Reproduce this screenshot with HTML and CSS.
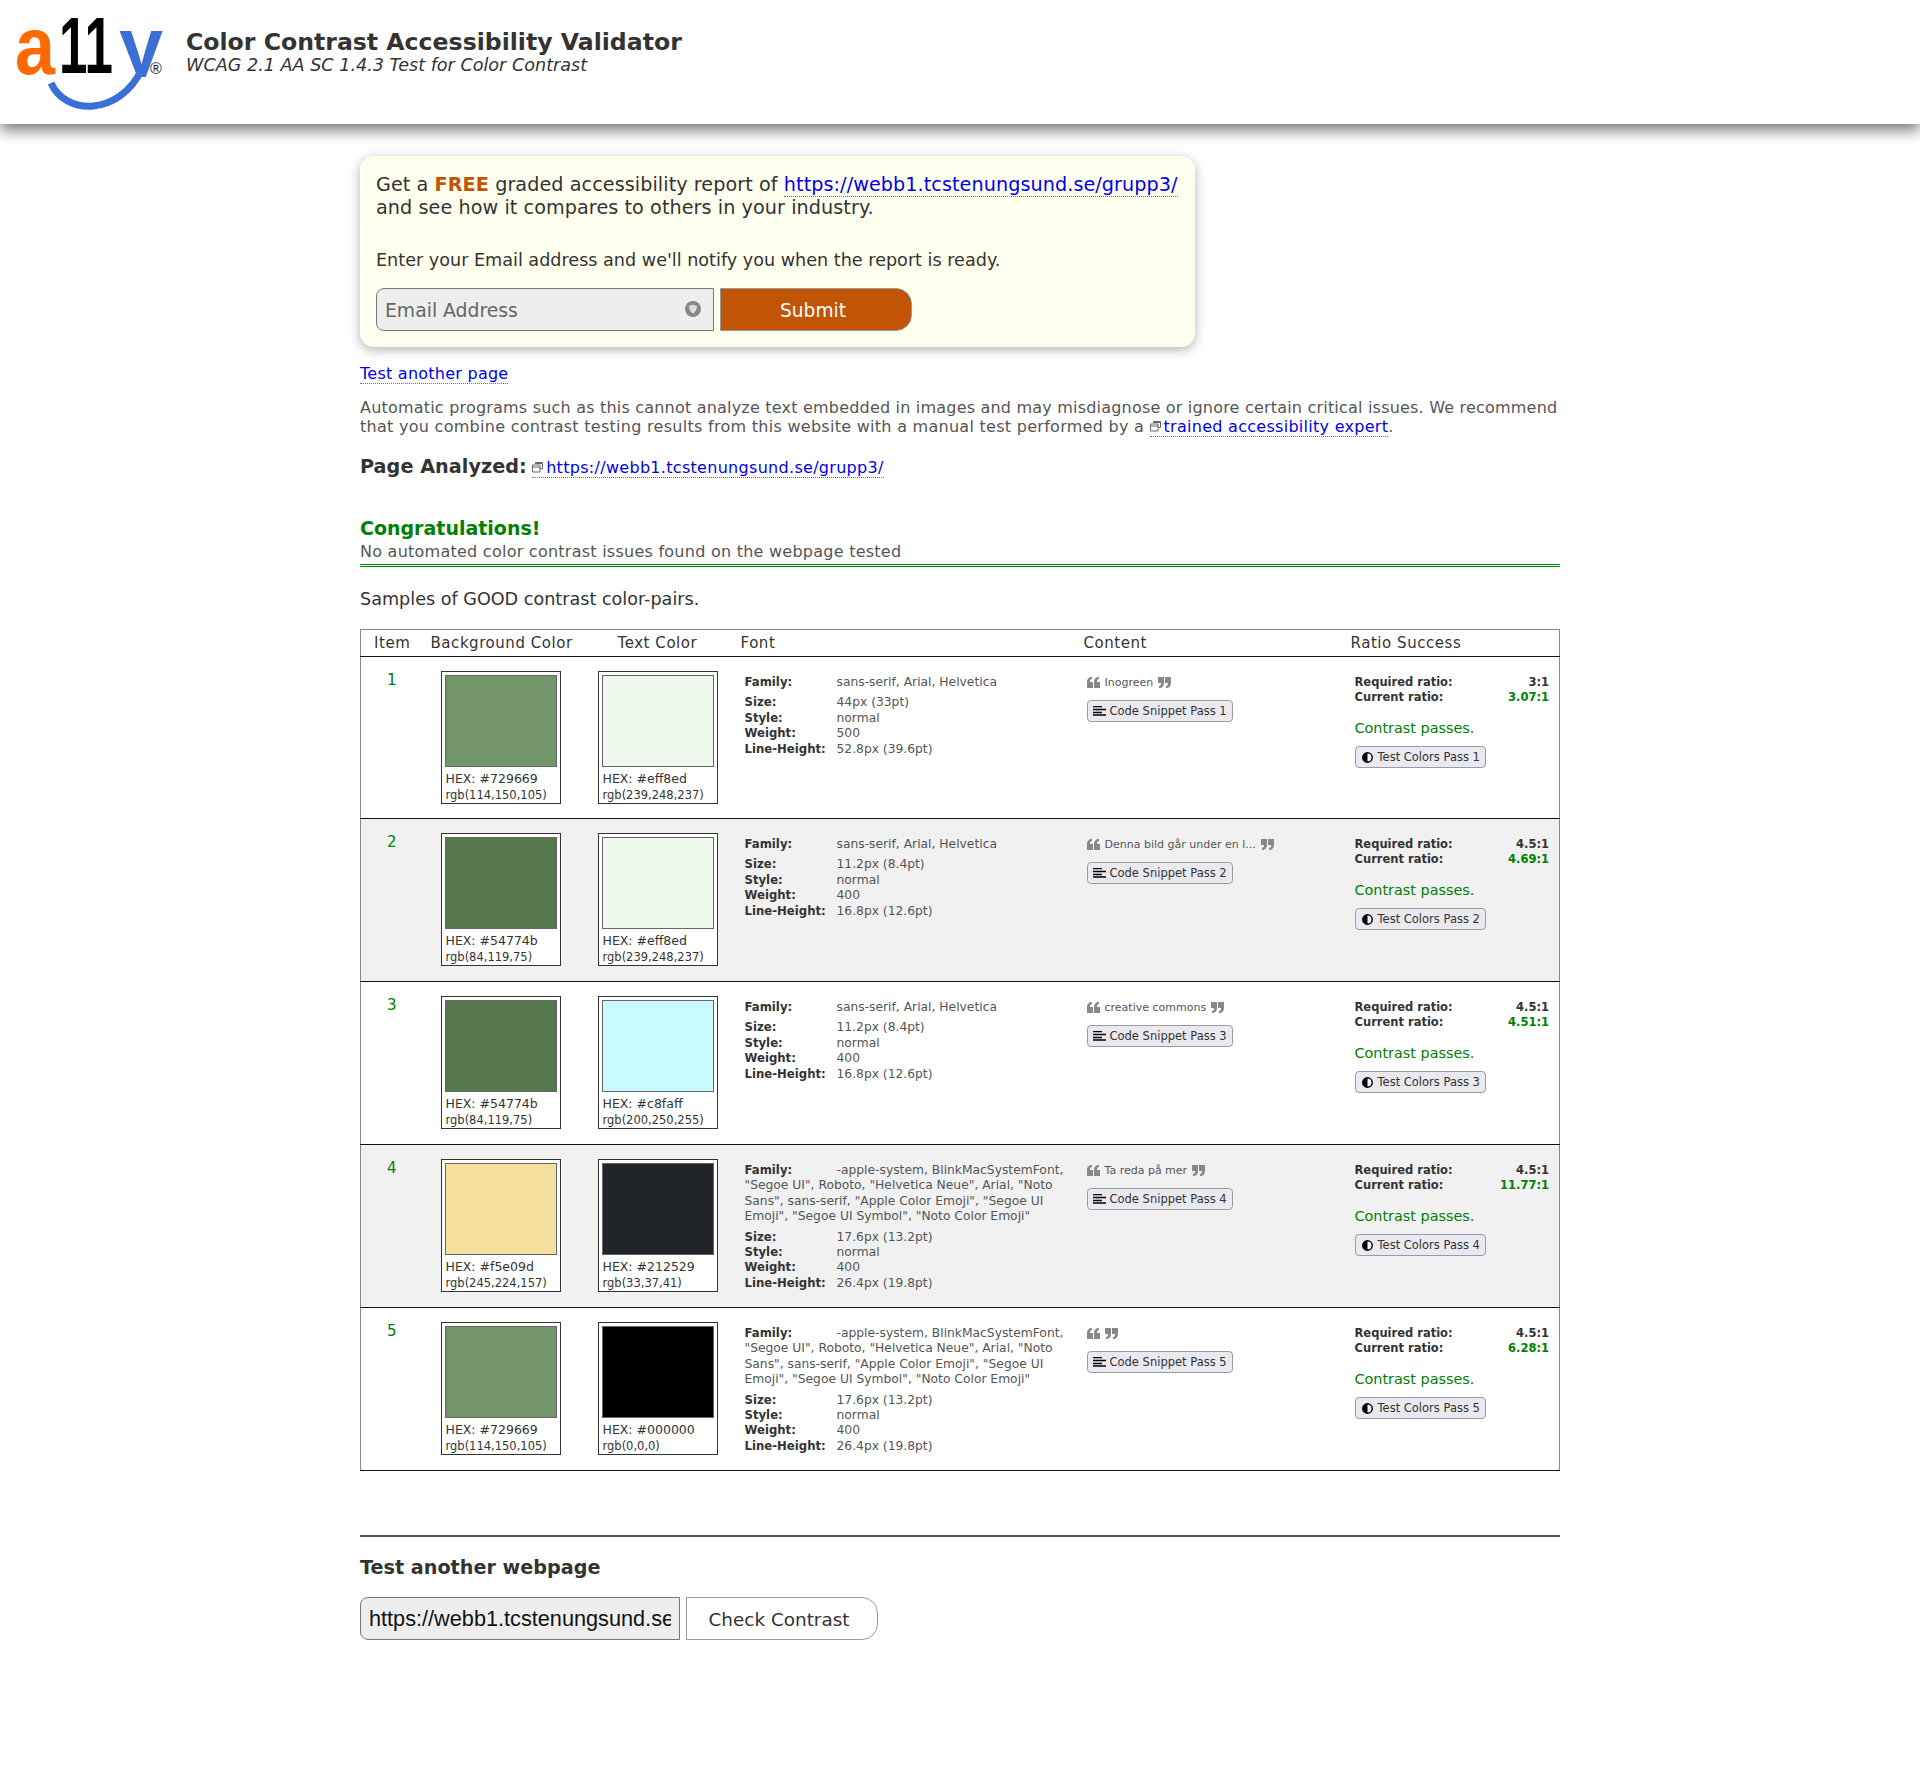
FILE: index.html
```
<!DOCTYPE html>
<html lang="en">
<head>
  <meta charset="UTF-8" />
  <title>Color Contrast Accessibility Validator</title>
  <link rel="stylesheet" href="styles.css">
</head>
<body>
  <header class="site-header">
    <svg class="logo" width="150" height="96" viewBox="0 0 150 96" aria-label="a11y">
      <defs><clipPath id="y-clip"><rect x="100" y="0" width="50" height="62"/></clipPath></defs>
      <path d="M36 68 C50 100 104 102 127 54" fill="none" stroke="#3a6fd6" stroke-width="7"/>
      <text x="0" y="59" font-size="82" font-weight="700" fill="#ff6a00" textLength="40" lengthAdjust="spacingAndGlyphs">a</text>
      <text x="44" y="58" font-size="80" fill="#000" font-weight="700" textLength="54" lengthAdjust="spacingAndGlyphs">11</text>
      <text x="104" y="59" font-size="82" font-weight="700" fill="#3a6fd6" textLength="44" lengthAdjust="spacingAndGlyphs" clip-path="url(#y-clip)">y</text>
      <text x="135" y="59" font-size="16" fill="#222">®</text>
    </svg>
    <div class="titles">
      <h1>Color Contrast Accessibility Validator</h1>
      <p>WCAG 2.1 AA SC 1.4.3 Test for Color Contrast</p>
    </div>
  </header>

  <main class="content">
    <section class="report-card">
      <p class="report-lead">Get a <strong>FREE</strong> graded accessibility report of <a href="#">https://webb1.tcstenungsund.se/grupp3/</a> and see how it compares to others in your industry.</p>
      <p class="report-note">Enter your Email address and we'll notify you when the report is ready.</p>
      <form class="report-form">
        <div class="email-wrap">
          <input class="text-input email-input" type="text" placeholder="Email Address">
          <svg class="email-icon" width="16" height="16" viewBox="0 0 16 16"><circle cx="8" cy="8" r="8" fill="#888"/><path d="M8 3.500 12 5c0 3.500-1.500 6-4 7.500-2.500-1.500-4-4-4-7.500z" fill="#ddd"/></svg>
        </div>
        <button class="submit-btn" type="button">Submit</button>
      </form>
    </section>

    <p class="again"><a href="#">Test another page</a></p>

    <p class="disclaimer">Automatic programs such as this cannot analyze text embedded in images and may misdiagnose or ignore certain critical issues. We recommend that you combine contrast testing results from this website with a manual test performed by a <a href="#"><svg class="ext" width="11" height="11" viewBox="0 0 11 11"><path d="M3 .5h7.500v6H8M.5 3h7.500v7H.5zM.5 5h7.500M3 1.500h7" fill="none" stroke="#666"/></svg>trained accessibility expert</a>.</p>

    <p class="analyzed"><strong>Page Analyzed:</strong> <a href="#"><svg class="ext" width="11" height="11" viewBox="0 0 11 11"><path d="M3 .5h7.500v6H8M.5 3h7.500v7H.5zM.5 5h7.500M3 1.500h7" fill="none" stroke="#666"/></svg>https://webb1.tcstenungsund.se/grupp3/</a></p>

    <h2 class="congrats">Congratulations!</h2>
    <p class="congrats-sub">No automated color contrast issues found on the webpage tested</p>

    <p class="samples">Samples of GOOD contrast color-pairs.</p>

    <table class="results">
      <thead>
        <tr>
          <th class="col-item">Item</th>
          <th class="col-bg">Background Color</th>
          <th class="col-text">Text Color</th>
          <th class="col-font">Font</th>
          <th class="col-content">Content</th>
          <th class="col-ratio">Ratio Success</th>
        </tr>
      </thead>
      <tbody>
        <tr>
          <td class="num">1</td>
          <td><div class="swatch"><div class="chip" style="background:#729669"></div><div class="hex">HEX: #729669</div><div class="rgb">rgb(114,150,105)</div></div></td>
          <td><div class="swatch"><div class="chip" style="background:#eff8ed"></div><div class="hex">HEX: #eff8ed</div><div class="rgb">rgb(239,248,237)</div></div></td>
          <td class="font-info">
            <p class="family"><b>Family:</b>sans-serif, Arial, Helvetica</p>
            <p><b>Size:</b>44px (33pt)</p><p><b>Style:</b>normal</p><p><b>Weight:</b>500</p><p><b>Line-Height:</b>52.8px (39.6pt)</p>
          </td>
          <td class="content-cell">
            <div class="quote"><svg class="q" width="13" height="11" viewBox="0 0 13 11"><path d="M0 11V5C0 2 2 0 5 0v2C3.500 2 3 3 3 5h3v6zM7 11V5c0-3 2-5 5-5v2c-1.500 0-2 1-2 3h3v6z" fill="#888"/></svg><span>Inogreen</span><svg class="q" width="13" height="11" viewBox="0 0 13 11"><path d="M13 0v6c0 3-2 5-5 5V9c1.500 0 2-1 2-3H7V0zM6 0v6c0 3-2 5-5 5V9c1.500 0 2-1 2-3H0V0z" fill="#888"/></svg></div>
            <button class="mini-btn" type="button"><svg width="13" height="10" viewBox="0 0 13 10"><path d="M0 .5h9M0 3.500h13M0 6.500h9M0 9h13" stroke="#000" stroke-width="1.500"/></svg>Code Snippet Pass 1</button>
          </td>
          <td class="ratio-cell">
            <div class="ratio-line"><b>Required ratio:</b><b>3:1</b></div>
            <div class="ratio-line"><b>Current ratio:</b><b class="good">3.07:1</b></div>
            <p class="passes">Contrast passes.</p>
            <button class="mini-btn" type="button"><svg width="11" height="11" viewBox="0 0 11 11"><circle cx="5.500" cy="5.500" r="4.700" fill="#fff" stroke="#000" stroke-width="1.500"/><path d="M5.500 .8a4.700 4.700 0 0 0 0 9.400z"/></svg>Test Colors Pass 1</button>
          </td>
        </tr>
        <tr>
          <td class="num">2</td>
          <td><div class="swatch"><div class="chip" style="background:#54774b"></div><div class="hex">HEX: #54774b</div><div class="rgb">rgb(84,119,75)</div></div></td>
          <td><div class="swatch"><div class="chip" style="background:#eff8ed"></div><div class="hex">HEX: #eff8ed</div><div class="rgb">rgb(239,248,237)</div></div></td>
          <td class="font-info">
            <p class="family"><b>Family:</b>sans-serif, Arial, Helvetica</p>
            <p><b>Size:</b>11.2px (8.4pt)</p><p><b>Style:</b>normal</p><p><b>Weight:</b>400</p><p><b>Line-Height:</b>16.8px (12.6pt)</p>
          </td>
          <td class="content-cell">
            <div class="quote"><svg class="q" width="13" height="11" viewBox="0 0 13 11"><path d="M0 11V5C0 2 2 0 5 0v2C3.500 2 3 3 3 5h3v6zM7 11V5c0-3 2-5 5-5v2c-1.500 0-2 1-2 3h3v6z" fill="#888"/></svg><span>Denna bild går under en l...</span><svg class="q" width="13" height="11" viewBox="0 0 13 11"><path d="M13 0v6c0 3-2 5-5 5V9c1.500 0 2-1 2-3H7V0zM6 0v6c0 3-2 5-5 5V9c1.500 0 2-1 2-3H0V0z" fill="#888"/></svg></div>
            <button class="mini-btn" type="button"><svg width="13" height="10" viewBox="0 0 13 10"><path d="M0 .5h9M0 3.500h13M0 6.500h9M0 9h13" stroke="#000" stroke-width="1.500"/></svg>Code Snippet Pass 2</button>
          </td>
          <td class="ratio-cell">
            <div class="ratio-line"><b>Required ratio:</b><b>4.5:1</b></div>
            <div class="ratio-line"><b>Current ratio:</b><b class="good">4.69:1</b></div>
            <p class="passes">Contrast passes.</p>
            <button class="mini-btn" type="button"><svg width="11" height="11" viewBox="0 0 11 11"><circle cx="5.500" cy="5.500" r="4.700" fill="#fff" stroke="#000" stroke-width="1.500"/><path d="M5.500 .8a4.700 4.700 0 0 0 0 9.400z"/></svg>Test Colors Pass 2</button>
          </td>
        </tr>
        <tr>
          <td class="num">3</td>
          <td><div class="swatch"><div class="chip" style="background:#54774b"></div><div class="hex">HEX: #54774b</div><div class="rgb">rgb(84,119,75)</div></div></td>
          <td><div class="swatch"><div class="chip" style="background:#c8faff"></div><div class="hex">HEX: #c8faff</div><div class="rgb">rgb(200,250,255)</div></div></td>
          <td class="font-info">
            <p class="family"><b>Family:</b>sans-serif, Arial, Helvetica</p>
            <p><b>Size:</b>11.2px (8.4pt)</p><p><b>Style:</b>normal</p><p><b>Weight:</b>400</p><p><b>Line-Height:</b>16.8px (12.6pt)</p>
          </td>
          <td class="content-cell">
            <div class="quote"><svg class="q" width="13" height="11" viewBox="0 0 13 11"><path d="M0 11V5C0 2 2 0 5 0v2C3.500 2 3 3 3 5h3v6zM7 11V5c0-3 2-5 5-5v2c-1.500 0-2 1-2 3h3v6z" fill="#888"/></svg><span>creative commons</span><svg class="q" width="13" height="11" viewBox="0 0 13 11"><path d="M13 0v6c0 3-2 5-5 5V9c1.500 0 2-1 2-3H7V0zM6 0v6c0 3-2 5-5 5V9c1.500 0 2-1 2-3H0V0z" fill="#888"/></svg></div>
            <button class="mini-btn" type="button"><svg width="13" height="10" viewBox="0 0 13 10"><path d="M0 .5h9M0 3.500h13M0 6.500h9M0 9h13" stroke="#000" stroke-width="1.500"/></svg>Code Snippet Pass 3</button>
          </td>
          <td class="ratio-cell">
            <div class="ratio-line"><b>Required ratio:</b><b>4.5:1</b></div>
            <div class="ratio-line"><b>Current ratio:</b><b class="good">4.51:1</b></div>
            <p class="passes">Contrast passes.</p>
            <button class="mini-btn" type="button"><svg width="11" height="11" viewBox="0 0 11 11"><circle cx="5.500" cy="5.500" r="4.700" fill="#fff" stroke="#000" stroke-width="1.500"/><path d="M5.500 .8a4.700 4.700 0 0 0 0 9.400z"/></svg>Test Colors Pass 3</button>
          </td>
        </tr>
        <tr>
          <td class="num">4</td>
          <td><div class="swatch"><div class="chip" style="background:#f5e09d"></div><div class="hex">HEX: #f5e09d</div><div class="rgb">rgb(245,224,157)</div></div></td>
          <td><div class="swatch"><div class="chip" style="background:#212529"></div><div class="hex">HEX: #212529</div><div class="rgb">rgb(33,37,41)</div></div></td>
          <td class="font-info">
            <p class="family"><b>Family:</b>-apple-system, BlinkMacSystemFont, "Segoe UI", Roboto, "Helvetica Neue", Arial, "Noto Sans", sans-serif, "Apple Color Emoji", "Segoe UI Emoji", "Segoe UI Symbol", "Noto Color Emoji"</p>
            <p><b>Size:</b>17.6px (13.2pt)</p><p><b>Style:</b>normal</p><p><b>Weight:</b>400</p><p><b>Line-Height:</b>26.4px (19.8pt)</p>
          </td>
          <td class="content-cell">
            <div class="quote"><svg class="q" width="13" height="11" viewBox="0 0 13 11"><path d="M0 11V5C0 2 2 0 5 0v2C3.500 2 3 3 3 5h3v6zM7 11V5c0-3 2-5 5-5v2c-1.500 0-2 1-2 3h3v6z" fill="#888"/></svg><span>Ta reda på mer</span><svg class="q" width="13" height="11" viewBox="0 0 13 11"><path d="M13 0v6c0 3-2 5-5 5V9c1.500 0 2-1 2-3H7V0zM6 0v6c0 3-2 5-5 5V9c1.500 0 2-1 2-3H0V0z" fill="#888"/></svg></div>
            <button class="mini-btn" type="button"><svg width="13" height="10" viewBox="0 0 13 10"><path d="M0 .5h9M0 3.500h13M0 6.500h9M0 9h13" stroke="#000" stroke-width="1.500"/></svg>Code Snippet Pass 4</button>
          </td>
          <td class="ratio-cell">
            <div class="ratio-line"><b>Required ratio:</b><b>4.5:1</b></div>
            <div class="ratio-line"><b>Current ratio:</b><b class="good">11.77:1</b></div>
            <p class="passes">Contrast passes.</p>
            <button class="mini-btn" type="button"><svg width="11" height="11" viewBox="0 0 11 11"><circle cx="5.500" cy="5.500" r="4.700" fill="#fff" stroke="#000" stroke-width="1.500"/><path d="M5.500 .8a4.700 4.700 0 0 0 0 9.400z"/></svg>Test Colors Pass 4</button>
          </td>
        </tr>
        <tr>
          <td class="num">5</td>
          <td><div class="swatch"><div class="chip" style="background:#729669"></div><div class="hex">HEX: #729669</div><div class="rgb">rgb(114,150,105)</div></div></td>
          <td><div class="swatch"><div class="chip" style="background:#000000"></div><div class="hex">HEX: #000000</div><div class="rgb">rgb(0,0,0)</div></div></td>
          <td class="font-info">
            <p class="family"><b>Family:</b>-apple-system, BlinkMacSystemFont, "Segoe UI", Roboto, "Helvetica Neue", Arial, "Noto Sans", sans-serif, "Apple Color Emoji", "Segoe UI Emoji", "Segoe UI Symbol", "Noto Color Emoji"</p>
            <p><b>Size:</b>17.6px (13.2pt)</p><p><b>Style:</b>normal</p><p><b>Weight:</b>400</p><p><b>Line-Height:</b>26.4px (19.8pt)</p>
          </td>
          <td class="content-cell">
            <div class="quote"><svg class="q" width="13" height="11" viewBox="0 0 13 11"><path d="M0 11V5C0 2 2 0 5 0v2C3.500 2 3 3 3 5h3v6zM7 11V5c0-3 2-5 5-5v2c-1.500 0-2 1-2 3h3v6z" fill="#888"/></svg><svg class="q" width="13" height="11" viewBox="0 0 13 11"><path d="M13 0v6c0 3-2 5-5 5V9c1.500 0 2-1 2-3H7V0zM6 0v6c0 3-2 5-5 5V9c1.500 0 2-1 2-3H0V0z" fill="#888"/></svg></div>
            <button class="mini-btn" type="button"><svg width="13" height="10" viewBox="0 0 13 10"><path d="M0 .5h9M0 3.500h13M0 6.500h9M0 9h13" stroke="#000" stroke-width="1.500"/></svg>Code Snippet Pass 5</button>
          </td>
          <td class="ratio-cell">
            <div class="ratio-line"><b>Required ratio:</b><b>4.5:1</b></div>
            <div class="ratio-line"><b>Current ratio:</b><b class="good">6.28:1</b></div>
            <p class="passes">Contrast passes.</p>
            <button class="mini-btn" type="button"><svg width="11" height="11" viewBox="0 0 11 11"><circle cx="5.500" cy="5.500" r="4.700" fill="#fff" stroke="#000" stroke-width="1.500"/><path d="M5.500 .8a4.700 4.700 0 0 0 0 9.400z"/></svg>Test Colors Pass 5</button>
          </td>
        </tr>
      </tbody>
    </table>

    <hr class="divider">
    <h2 class="another">Test another webpage</h2>
    <form class="another-form">
      <input class="text-input url-input" type="text" value="https://webb1.tcstenungsund.se/grupp3/">
      <button class="check-btn" type="button">Check Contrast</button>
    </form>
  </main>
</body>
</html>
```

FILE: styles.css
```
* {
  margin: 0;
  padding: 0;
  box-sizing: border-box;
}

body {
  font-family: "DejaVu Sans", Verdana, sans-serif;
  color: #333;
  background-color: #fff;
  min-height: 1765px;
}

a {
  color: #00e;
  text-decoration: none;
  border-bottom: 1px dotted #66c;
}

/* header */
.site-header {
  display: flex;
  height: 124px;
  padding: 15px 0 0 15px;
  background-color: #fff;
  box-shadow: 0 6px 14px rgba(0,0,0,0.55);
}
.logo {
  flex: none;
  overflow: visible;
}
.logo text { font-family: "Liberation Sans", Arial, sans-serif; }
.titles {
  margin-left: 21px;
  padding-top: 12px;
}
.titles h1 {
  font-size: 23.6px;
  line-height: 30px;
  color: #333;
}
.titles p {
  font-size: 17.6px;
  font-style: italic;
  line-height: 20px;
  margin-top: -2px;
}

.content {
  width: 1200px;
  margin: 0 0 0 360px;
}

/* report card */
.report-card {
  width: 835px;
  height: 191px;
  margin-top: 32px;
  padding: 17px 16px;
  background-color: #ffffef;
  border-radius: 14px;
  box-shadow: 0 3px 12px rgba(0,0,0,0.3);
}
.report-lead {
  font-size: 19.2px;
  line-height: 23px;
  letter-spacing: 0.07px;
}
.report-lead strong {
  color: #c25505;
}
.report-note {
  font-size: 17.6px;
  line-height: 20px;
  margin-top: 31px;
}
.report-form {
  display: flex;
  gap: 6px;
  margin-top: 18px;
}
.email-wrap {
  position: relative;
}
.text-input {
  height: 43px;
  background-color: #eee;
  border: 1px solid #777;
  border-radius: 8px 0 0 8px;
}
.email-input {
  width: 338px;
  padding: 2px 8px 0;
  font: 18.8px "DejaVu Sans", sans-serif;
}
.email-input::placeholder {
  color: #666;
}
.email-icon {
  position: absolute;
  right: 13px;
  top: 13px;
}
.submit-btn {
  width: 192px;
  height: 43px;
  padding: 2px 6px 0 0;
  font: 18.6px "DejaVu Sans", sans-serif;
  color: #fff;
  background-color: #c25505;
  border: 1px solid #999;
  border-radius: 0 16px 16px 0;
}

.again {
  font-size: 16px;
  line-height: 20px;
  letter-spacing: 0.25px;
  margin-top: 17px;
}
.disclaimer {
  font-size: 16px;
  line-height: 19px;
  letter-spacing: 0.28px;
  color: #555;
  margin-top: 14px;
}
.disclaimer::first-line {
  letter-spacing: 0.2px;
}
.ext {
  margin-right: 3px;
}
.analyzed {
  font-size: 16px;
  line-height: 22px;
  letter-spacing: 0.3px;
  margin-top: 20px;
}
.analyzed strong {
  font-size: 19.2px;
  letter-spacing: 0.05px;
}

.congrats {
  font-size: 19px;
  line-height: 24px;
  color: #008000;
  margin-top: 37px;
}
.congrats-sub {
  font-size: 16px;
  line-height: 20px;
  letter-spacing: 0.25px;
  color: #555;
  padding-top: 2px;
  padding-bottom: 2px;
  border-bottom: 3px double #008000;
}
.samples {
  font-size: 17.6px;
  line-height: 20px;
  margin-top: 22px;
}

/* results table */
.results {
  width: 1200px;
  margin-top: 20px;
  border-collapse: collapse;
  table-layout: fixed;
  border: 1px solid #888;
  border-bottom-color: #222;
}
.results th {
  height: 27px;
  font-size: 15px;
  font-weight: normal;
  letter-spacing: 0.55px;
  text-align: left;
  white-space: nowrap;
  border-bottom: 1px solid #111;
}
.col-item { width: 70px; padding-left: 13px; }
.col-bg { width: 157px; }
.col-text { width: 153px; padding-left: 30px; }
.col-font { width: 343px; }
.col-content { width: 267px; }
.results td {
  height: 163px;
  vertical-align: top;
  border-bottom: 1px solid #111;
}
.results tbody tr:first-child td {
  height: 162px;
}
.results tbody tr:nth-child(even) td {
  background-color: #f1f1f1;
}
.results td.num {
  padding: 14px 0 0 26px;
  font-size: 15px;
  color: #008000;
}
.swatch {
  width: 120px;
  height: 133px;
  margin: 14px 0 0 10px;
  padding: 3px;
  background-color: #fff;
  border: 1px solid #333;
}
.chip {
  width: 112px;
  height: 92px;
  border: 1px solid #666;
}
.hex {
  font-size: 12.5px;
  line-height: 16px;
  margin-top: 4px;
  padding-left: 1px;
}
.rgb {
  font-size: 11.5px;
  line-height: 16px;
  padding-left: 1px;
}
.font-info {
  padding: 18px 4px 0 4px;
  font-size: 12.3px;
  line-height: 15.4px;
  color: #555;
}
.font-info b {
  display: inline-block;
  width: 92px;
  color: #333;
  font-size: 11.7px;
}
.family {
  margin-bottom: 5px;
}
.content-cell {
  padding: 18px 0 0 3px;
}
.quote {
  display: flex;
  align-items: center;
  gap: 5px;
  height: 15px;
  font-size: 11px;
  color: #555;
}
.mini-btn {
  display: inline-flex;
  align-items: center;
  gap: 4px;
  height: 22px;
  padding: 0 5px;
  font: 11.5px "DejaVu Sans", sans-serif;
  color: #333;
  background-color: #e9e9ef;
  border: 1px solid #9a9aaa;
  border-radius: 4px;
}
.content-cell .mini-btn {
  margin-top: 10px;
}
.ratio-cell {
  padding: 18px 10px 0 4px;
}
.ratio-line {
  display: flex;
  justify-content: space-between;
  font-size: 11.5px;
  line-height: 15px;
}
.ratio-line .good {
  color: #008000;
}
.passes {
  font-size: 14.4px;
  line-height: 20px;
  margin-top: 13px;
  color: #008000;
}
.ratio-cell .mini-btn {
  margin-top: 8px;
  gap: 5px;
  padding: 0 5px 0 6px;
}

/* bottom form */
.divider {
  height: 2px;
  margin-top: 64px;
  background-color: #555;
  border: 0;
}
.another {
  font-size: 19.2px;
  line-height: 24px;
  margin-top: 19px;
}
.another-form {
  display: flex;
  gap: 6px;
  margin-top: 17px;
}
.url-input {
  width: 320px;
  padding: 0 8px;
  font: 21.7px "Liberation Sans", Arial, sans-serif;
  color: #111;
}
.check-btn {
  width: 192px;
  height: 43px;
  padding: 2px 6px 0 0;
  font: 18.4px "DejaVu Sans", sans-serif;
  color: #333;
  background-color: #fff;
  border: 1px solid #999;
  border-radius: 0 16px 16px 0;
}
```
